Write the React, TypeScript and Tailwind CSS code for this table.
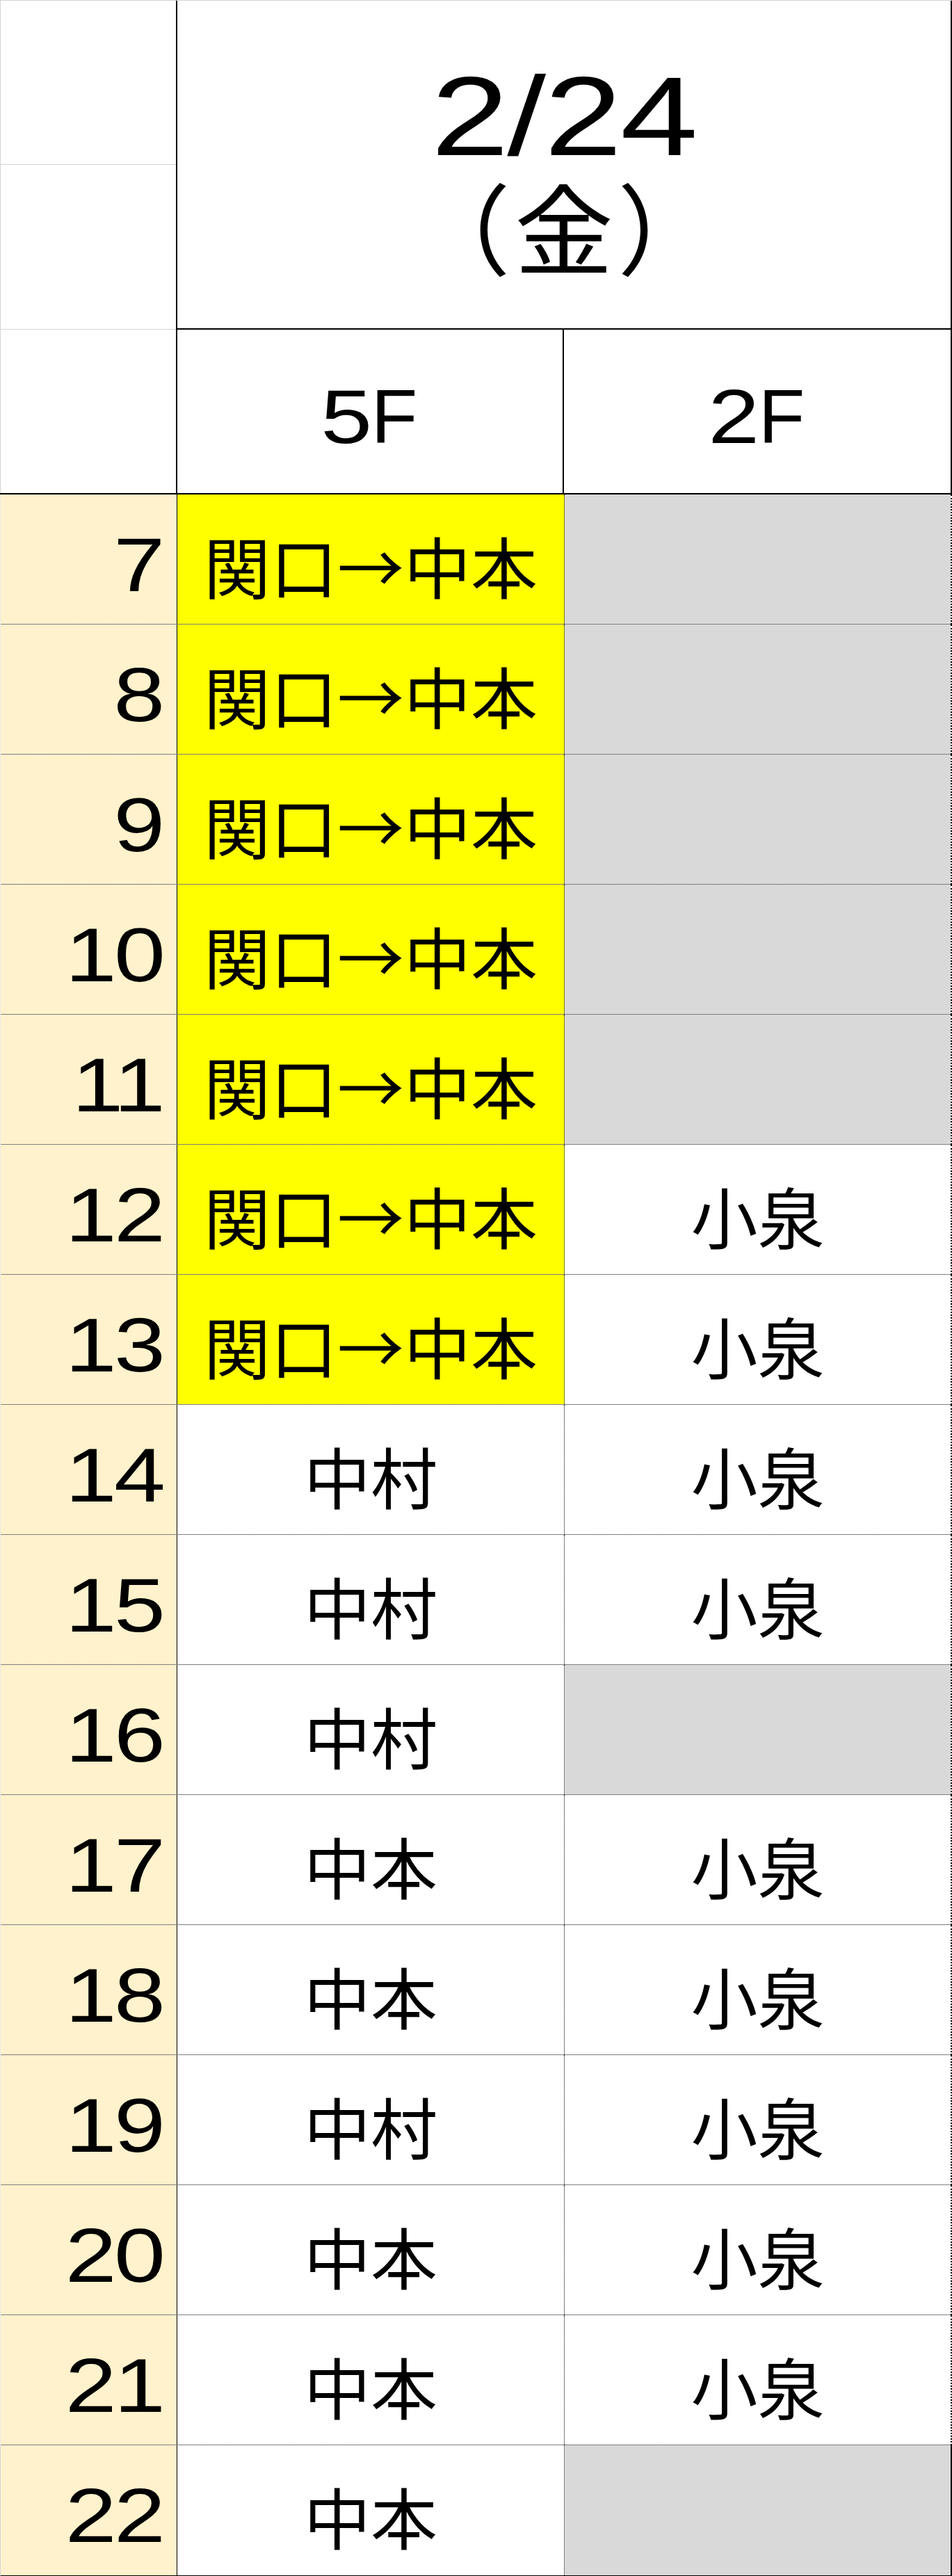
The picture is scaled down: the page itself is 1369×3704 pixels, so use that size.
import React from 'react'

type Row = { hour: number; fifth: string; second: string | null; marked?: boolean }

const ROWS: Row[] = [
  { hour: 7, fifth: '関口→中本', second: null, marked: true },
  { hour: 8, fifth: '関口→中本', second: null, marked: true },
  { hour: 9, fifth: '関口→中本', second: null, marked: true },
  { hour: 10, fifth: '関口→中本', second: null, marked: true },
  { hour: 11, fifth: '関口→中本', second: null, marked: true },
  { hour: 12, fifth: '関口→中本', second: '小泉', marked: true },
  { hour: 13, fifth: '関口→中本', second: '小泉', marked: true },
  { hour: 14, fifth: '中村', second: '小泉' },
  { hour: 15, fifth: '中村', second: '小泉' },
  { hour: 16, fifth: '中村', second: null },
  { hour: 17, fifth: '中本', second: '小泉' },
  { hour: 18, fifth: '中本', second: '小泉' },
  { hour: 19, fifth: '中村', second: '小泉' },
  { hour: 20, fifth: '中本', second: '小泉' },
  { hour: 21, fifth: '中本', second: '小泉' },
  { hour: 22, fifth: '中本', second: null },
]

// the sheet's digits are wide, so Arial-metric text is stretched sideways
const latin = "font-['Liberation_Sans','Noto_Sans_CJK_JP',sans-serif]"
const jp = "font-['Noto_Sans_CJK_JP',sans-serif]"

function FloorLabel({ digit }: { digit: string }) {
  return (
    <div className={`flex items-center justify-center pt-[16px] ${latin} text-[109px] leading-none`}>
      <span className="inline-block w-[70px] text-center">
        <span className="inline-block scale-x-[1.22]">{digit}</span>
      </span>
      <span>F</span>
    </div>
  )
}

export default function App() {
  return (
    <div className="w-[1369px] h-[3704px] bg-white text-black">
      {/* header */}
      <div className="flex h-[711px] border-t border-[#d4d4d4] border-b-2 border-b-black">
        <div className="w-[255px] flex flex-col border-l border-[#d4d4d4] border-r-2 border-r-black">
          <div className="h-[236px] border-b border-[#d4d4d4]" />
          <div className="h-[237px] border-b border-[#d4d4d4]" />
          <div className="flex-1" />
        </div>
        <div className="flex-1 flex flex-col border-r-2 border-black">
          <div className="h-[473px] border-b-2 border-black flex flex-col items-center pt-[101px]">
            <div className={`${latin} text-[162px] leading-[130px] scale-x-[1.24] tracking-[-2px]`}>2/24</div>
            <div className={`${jp} text-[142px] leading-none mt-[20px] tracking-[6px] pl-[6px]`}>（金）</div>
          </div>
          <div className="flex flex-1">
            <div className="w-[556px] border-r-2 border-black flex items-center justify-center">
              <FloorLabel digit="5" />
            </div>
            <div className="flex-1 flex items-center justify-center">
              <FloorLabel digit="2" />
            </div>
          </div>
        </div>
      </div>

      {/* hours */}
      {ROWS.map((row, i) => {
        const last = i === ROWS.length - 1
        return (
          <div
            key={row.hour}
            className={`flex border-l border-l-[#d4d4d4] border-r-2 border-r-black ${
              last ? 'h-[189px] border-b-2 border-b-black' : 'h-[187px] border-b border-dotted border-b-black'
            }`}
          >
            <div className={`w-[254px] bg-[#fff2cc] border-r border-black flex items-center justify-end pr-[20px] pt-[16px] ${latin} text-[109px] leading-none`}>
              <span className="inline-block origin-right scale-x-[1.22] tracking-[-3px]">{row.hour}</span>
            </div>
            <div
              className={`w-[557px] border-r border-dotted border-black flex items-center justify-center pt-[15px] ${jp} text-[96px] leading-none ${
                row.marked ? 'bg-[#ffff00]' : ''
              }`}
            >
              {row.fifth}
            </div>
            <div
              className={`flex-1 flex items-center justify-center pt-[15px] ${jp} text-[96px] leading-none ${
                row.second ? '' : 'bg-[#d9d9d9]'
              }`}
            >
              {row.second}
            </div>
          </div>
        )
      })}
    </div>
  )
}
